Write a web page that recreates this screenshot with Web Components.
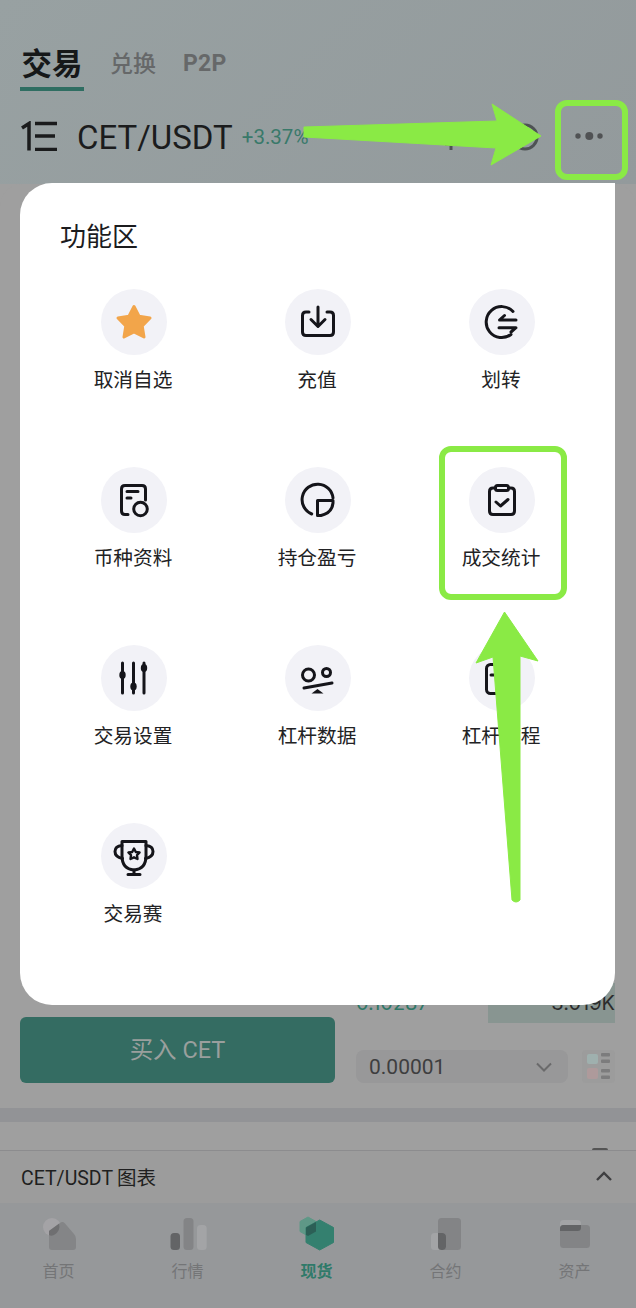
<!DOCTYPE html>
<html lang="zh">
<head>
<meta charset="utf-8">
<title>CET/USDT</title>
<style>
    html, body { margin: 0; padding: 0; background: #9f9f9f; }
    body { font-family: Inter, "Noto Sans CJK SC", sans-serif; }
</style>
</head>
<body>
<trade-page>
    <trade-header></trade-header>
    <market-sheet></market-sheet>
    <chart-bar></chart-bar>
    <bottom-nav>
        <nav-item label="首页">
            <svg viewBox="0 0 40 40" width="40" height="40">
                <circle cx="13" cy="12" r="9" fill="#a4a3a6"/>
                <path d="M10 16 L21 8 Q23.500 6 26 8.500 L35 19 Q37 21 37 24 V32 Q37 35 34 35 H13 Q10 35 10 32 Z" fill="#848587"/>
                <path d="M10 20 V16 L20 8.800 Q22 16 15 20 Q12 21.500 10 20 Z" fill="#6f6f71"/>
            </svg>
        </nav-item>
        <nav-item label="行情">
            <svg viewBox="0 0 40 40" width="40" height="40">
                <rect x="2.500" y="18" width="9.500" height="17" rx="3.500" fill="#636466"/>
                <rect x="15.500" y="3" width="10" height="32" rx="3.500" fill="#838486"/>
                <rect x="29" y="10" width="9.700" height="25" rx="3.500" fill="#a3a4a6"/>
            </svg>
        </nav-item>
        <nav-item label="现货">
            <svg viewBox="0 0 40 40" width="40" height="40">
                <path d="M11 2 L19 6.500 V16.500 L11 21 L3 16.500 V6.500 Z" fill="#5f9887" stroke="#5f9887" stroke-linejoin="round"/>
                <path d="M22.700 5 L36.500 12.500 V27.500 L22.700 35 L9 27.500 V12.500 Z" fill="#34806f" stroke="#34806f" stroke-linejoin="round"/>
                <path d="M9 12.500 L19 7 V16.500 L11 21 L9 19.800 Z" fill="#2c5f56"/>
            </svg>
        </nav-item>
        <nav-item label="合约">
            <svg viewBox="0 0 40 40" width="40" height="40">
                <rect x="12" y="3" width="23" height="32" rx="3.500" fill="#838486"/>
                <rect x="5" y="18" width="15" height="17" rx="3.500" fill="#a3a4a6"/>
                <path d="M12 18 H16.500 Q20 18 20 21.500 V31.500 Q20 35 16.500 35 H15.500 Q12 35 12 31.500 Z" fill="#636466"/>
            </svg>
        </nav-item>
        <nav-item label="资产">
            <svg viewBox="0 0 40 40" width="40" height="40">
                <rect x="5" y="5" width="21" height="11" rx="3.500" fill="#a3a4a6"/>
                <rect x="5" y="10" width="30" height="23" rx="3.500" fill="#838486"/>
                <path d="M8.500 10 H26 V12.500 Q26 16 22.500 16 H5 V13.500 Q5 10 8.500 10 Z" fill="#636466"/>
            </svg>
        </nav-item>
    </bottom-nav>

    <feature-sheet title="功能区">
        <feature-item label="取消自选">
            <svg viewBox="0 0 66 66"><path d="M33 17.500 L38 27.300 L49 29 L41.200 37 L43 48 L33 43 L23 48 L24.800 37 L17 29 L28 27.300 Z" fill="#f2a54a" stroke="#f2a54a" stroke-width="3" stroke-linejoin="round"/></svg>
        </feature-item>
        <feature-item label="充值">
            <svg viewBox="0 0 66 66" fill="none" stroke="#15151a" stroke-width="3" stroke-linecap="round" stroke-linejoin="round"><path d="M24 23 H21 Q17.500 23 17.500 26.500 V43 Q17.500 46.500 21 46.500 H45 Q48.500 46.500 48.500 43 V26.500 Q48.500 23 45 23 H42"/><path d="M33 18 V37 M26 30.500 L33 37.500 L40 30.500"/></svg>
        </feature-item>
        <feature-item label="划转">
            <svg viewBox="0 0 66 66" fill="none" stroke="#15151a" stroke-width="3" stroke-linecap="round" stroke-linejoin="round"><path d="M44 22.500 A15.500 15.500 0 1 0 42 45.500"/><path d="M47 31 H30.500 L35.500 26.500"/><path d="M30 38.700 H47 L42 43"/></svg>
        </feature-item>
        <feature-item label="币种资料">
            <svg viewBox="0 0 66 66" fill="none" stroke="#15151a" stroke-width="3" stroke-linecap="round" stroke-linejoin="round"><path d="M27 47.500 H24 Q20.500 47.500 20.500 44 V22 Q20.500 18.500 24 18.500 H41 Q44.500 18.500 44.500 22 V33"/><path d="M26 24.500 H37 M26 31 H30"/><circle cx="39.500" cy="42" r="6.800"/></svg>
        </feature-item>
        <feature-item label="持仓盈亏">
            <svg viewBox="0 0 66 66" fill="none" stroke="#15151a" stroke-width="3" stroke-linecap="round" stroke-linejoin="round"><path d="M26.700 47 A15.500 15.500 0 1 1 48 31"/><path d="M32.500 33.500 H48 V36 Q47 46 36 48.500 H32.500 Z"/></svg>
        </feature-item>
        <feature-item label="成交统计">
            <svg viewBox="0 0 66 66" fill="none" stroke="#15151a" stroke-width="3" stroke-linecap="round" stroke-linejoin="round"><path d="M26.500 21 H24 Q20.500 21 20.500 24.500 V44 Q20.500 47.500 24 47.500 H42 Q45.500 47.500 45.500 44 V24.500 Q45.500 21 42 21 H39.500"/><rect x="26.500" y="18.500" width="13" height="5" rx="2"/><path d="M27 35 L31.500 39 L39 32.500"/></svg>
        </feature-item>
        <feature-item label="交易设置">
            <svg viewBox="0 0 66 66" fill="none" stroke="#15151a" stroke-width="3" stroke-linecap="round"><path d="M21.500 18 V48 M32.500 18 V48 M43 18 V48"/><g fill="#15151a" stroke="none"><ellipse cx="21.500" cy="30" rx="3.200" ry="4"/><ellipse cx="32.500" cy="41.500" rx="3.200" ry="4"/><ellipse cx="43" cy="23" rx="3.200" ry="4"/></g></svg>
        </feature-item>
        <feature-item label="杠杆数据">
            <svg viewBox="0 0 66 66" fill="none" stroke="#15151a" stroke-width="3" stroke-linecap="round"><circle cx="23.500" cy="30" r="6"/><circle cx="41.500" cy="27.500" r="4"/><path d="M19 43 L47 38"/><path d="M32.500 44 L38.500 48.500 H26.500 Z" fill="#15151a" stroke="none"/></svg>
        </feature-item>
        <feature-item label="杠杆教程">
            <svg viewBox="0 0 66 66" fill="none" stroke="#15151a" stroke-width="3" stroke-linecap="round"><rect x="17.500" y="19.500" width="30" height="29" rx="4"/><path d="M22 30 H26"/></svg>
        </feature-item>
        <feature-item label="交易赛">
            <svg viewBox="0 0 66 66" fill="none" stroke="#15151a" stroke-width="3" stroke-linecap="round" stroke-linejoin="round"><path d="M21 18.500 H45 V33 Q45 46 33 47 Q21 46 21 33 Z"/><path d="M21 22.500 Q14 23 14 28.500 Q14 34 21.500 35.500 M45 22.500 Q52 23 52 28.500 Q52 34 44.500 35.500"/><path d="M33 47 V51 M27 51.500 H39"/><path d="M33 25.500 L34.800 29 L38.600 29.500 L36 32.200 L36.500 36 L33 34.300 L29.500 36 L30 32.200 L27.400 29.500 L31.200 29 Z" stroke-width="2.400"/></svg>
        </feature-item>
    </feature-sheet>

    <guide-marks></guide-marks>
</trade-page>

<script>
    class TradePage extends HTMLElement {
        constructor() {
            super();
            this.attachShadow({ mode: "open" });
            this.shadowRoot.innerHTML = `
            <style>
                :host {
                    display: flex;
                    flex-direction: column;
                    position: relative;
                    width: 636px;
                    height: 1308px;
                    overflow: hidden;
                    background: #9f9f9f;
                }
            </style>
            <slot></slot>
            `;
        }
    }

    class TradeHeader extends HTMLElement {
        constructor() {
            super();
            this.attachShadow({ mode: "open" });
            this.shadowRoot.innerHTML = `
            <style>
                :host {
                    display: block;
                    height: 184px;
                    box-sizing: border-box;
                    padding: 42px 8px 0 20px;
                    background: linear-gradient(135deg, #98a1a2, #939a9c);
                }
                .tabs {
                    display: flex;
                    align-items: flex-start;
                    gap: 26px;
                    height: 49px;
                }
                .tab {
                    font-size: 23px;
                    line-height: 44px;
                    font-weight: 500;
                    color: #666869;
                    height: 49px;
                    box-sizing: border-box;
                }
                .tab.latin { font-family: Roboto, sans-serif; font-weight: 700; font-size: 23px; letter-spacing: .3px; margin-left: 1px; }
                .tab.on {
                    font-size: 30.500px;
                    font-weight: 700;
                    color: #161819;
                    width: 64px;
                    text-align: center;
                    white-space: nowrap;
                    border-bottom: 4px solid #2f6e62;
                }
                .pair {
                    display: flex;
                    align-items: center;
                    height: 50px;
                    margin-top: 20px;
                }
                .logo { width: 36px; height: 30px; margin-left: 1px; }
                .name {
                    font-family: Roboto, sans-serif;
                    font-size: 33px;
                    color: #1b1c1d;
                    margin: 2px 0 0 20px;
                }
                .rate {
                    font-family: Roboto, sans-serif;
                    font-size: 20.500px;
                    color: #39796a;
                    margin-left: 9px;
                    margin-top: 2px;
                }
                .tools {
                    margin-left: auto;
                    display: flex;
                    align-items: center;
                    gap: 34px;
                }
                .dots { display: block; margin-right: 21px; }
            </style>
            <div class="tabs">
                <div class="tab on">交易</div>
                <div class="tab">兑换</div>
                <div class="tab latin">P2P</div>
            </div>
            <div class="pair">
                <svg class="logo" viewBox="0 0 36 30" fill="none" stroke="#1a1b1c" stroke-width="3.500"><path d="M1 7 L8 2.500 V29.500"/><path d="M14 2.500 H36 M14 15 H34 M14 28.500 H36"/></svg>
                <span class="name">CET/USDT</span>
                <span class="rate">+3.37%</span>
                <span class="tools">
                    <svg width="100" height="36" viewBox="0 0 100 36" fill="none" stroke="#4e5254" stroke-width="3"><path d="M4 26 H16 M10 26 V32"/><circle cx="84" cy="19" r="12"/></svg>
                    <svg class="dots" width="32" height="10" viewBox="0 0 32 10" fill="#505254"><circle cx="3" cy="5" r="2.700"/><circle cx="14.300" cy="5" r="4"/><circle cx="25" cy="5" r="2.700"/></svg>
                </span>
            </div>
            `;
        }
    }

    class MarketSheet extends HTMLElement {
        constructor() {
            super();
            this.attachShadow({ mode: "open" });
            this.shadowRoot.innerHTML = `
            <style>
                :host {
                    display: flex;
                    align-items: flex-end;
                    gap: 21px;
                    height: 924px;
                    box-sizing: border-box;
                    padding: 0 21px 25px 20px;
                    background: #9f9f9f;
                    border-radius: 22px 22px 0 0;
                    font-family: Inter, sans-serif;
                }
                .buy {
                    width: 315px;
                    height: 66px;
                    flex: none;
                    box-sizing: border-box;
                    padding-bottom: 4px;
                    display: flex;
                    align-items: center;
                    justify-content: center;
                    border-radius: 6px;
                    background: #346c62;
                    color: #9a9f9d;
                    font-size: 23.500px;
                    font-family: Roboto, "Noto Sans CJK SC", sans-serif;
                }
                .side { flex: 1; }
                .row {
                    display: flex;
                    justify-content: space-between;
                    align-items: center;
                    height: 40px;
                    font-size: 20px;
                }
                .price { color: #2f7868; }
                .qty {
                    width: 127px;
                    height: 40px;
                    box-sizing: border-box;
                    text-align: right;
                    line-height: 40px;
                    background: #889591;
                    color: #2c2c2c;
                }
                .tools {
                    display: flex;
                    justify-content: space-between;
                    margin-top: 27px;
                }
                .select {
                    width: 212px;
                    height: 33px;
                    box-sizing: border-box;
                    padding: 0 15px 0 13px;
                    display: flex;
                    align-items: center;
                    justify-content: space-between;
                    border-radius: 8px;
                    background: #989899;
                    color: #3e3e3f;
                    font-size: 21px;
                    font-family: Roboto, sans-serif;
                }
                .book { width: 33px; height: 33px; display: block; }
            </style>
            <div class="buy"><span>买入 CET</span></div>
            <div class="side">
                <div class="row">
                    <span class="price">0.10287</span>
                    <span class="qty">3.019K</span>
                </div>
                <div class="tools">
                    <div class="select">
                        <span>0.00001</span>
                        <svg width="18" height="10" viewBox="0 0 18 10" fill="none" stroke="#6a6a6b" stroke-width="2"><path d="M2 1.500 L9 8.500 L16 1.500"/></svg>
                    </div>
                    <svg class="book" viewBox="0 0 33 33">
                        <rect width="33" height="33" rx="4" fill="#9c9c9c"/>
                        <rect x="5" y="4" width="11" height="10" rx="2" fill="#9fb0ae"/>
                        <rect x="5" y="18" width="11" height="11" rx="2" fill="#ae9a9b"/>
                        <rect x="19" y="3" width="9" height="3.500" rx="1" fill="#7c7c7d"/>
                        <rect x="19" y="9.500" width="9" height="3.500" rx="1" fill="#7c7c7d"/>
                        <rect x="19" y="19" width="9" height="3.500" rx="1" fill="#7c7c7d"/>
                        <rect x="19" y="25.500" width="9" height="3.500" rx="1" fill="#7c7c7d"/>
                    </svg>
                </div>
            </div>
            `;
        }
    }

    class ChartBar extends HTMLElement {
        constructor() {
            super();
            this.attachShadow({ mode: "open" });
            this.shadowRoot.innerHTML = `
            <style>
                :host { display: block; }
                .gap { height: 14px; background: #929396; }
                .peek {
                    height: 28px;
                    display: flex;
                    align-items: flex-end;
                    justify-content: flex-end;
                    padding-right: 28px;
                    background: #9f9f9f;
                }
                .peek i { width: 16px; height: 2px; border-radius: 3px 3px 0 0; background: #555; }
                .bar {
                    height: 53px;
                    box-sizing: border-box;
                    display: flex;
                    align-items: center;
                    justify-content: space-between;
                    padding: 0 23px 2px 21px;
                    border-top: 1px solid #8c8c8e;
                    background: #9c9c9c;
                    font-family: Roboto, "Noto Sans CJK SC", sans-serif;
                    font-size: 19.500px;
                    color: #1f1f20;
                }
                .bar b { font-weight: 400; margin-left: 4px; }
            </style>
            <div class="gap"></div>
            <div class="peek"><i></i></div>
            <div class="bar">
                <span>CET/USDT<b>图表</b></span>
                <svg width="18" height="12" viewBox="0 0 18 12" fill="none" stroke="#3f3f41" stroke-width="2.400"><path d="M2 10 L9 3 L16 10"/></svg>
            </div>
            `;
        }
    }

    class BottomNav extends HTMLElement {
        constructor() {
            super();
            this.attachShadow({ mode: "open" });
            this.shadowRoot.innerHTML = `
            <style>
                :host {
                    display: grid;
                    grid-template-columns: repeat(5, 129px);
                    align-content: start;
                    margin-left: -6px;
                    flex: 1;
                    padding-top: 12px;
                    background: #96989a;
                }
                ::slotted(nav-item:nth-child(3)) { --nav-color: #2f7a69; --nav-weight: 700; }
            </style>
            <slot></slot>
            `;
        }
    }

    class NavItem extends HTMLElement {
        constructor() {
            super();
            this.attachShadow({ mode: "open" });
            this.shadowRoot.innerHTML = `
            <style>
                :host {
                    display: flex;
                    flex-direction: column;
                    align-items: center;
                    gap: 4px;
                    font-size: 16px;
                    line-height: 24px;
                    color: var(--nav-color, #747577);
                    font-weight: var(--nav-weight, 400);
                }
                ::slotted(svg) { display: block; }
            </style>
            <slot></slot>
            <span id="label"></span>
            `;
        }

        connectedCallback() {
            this.shadowRoot.querySelector("#label").textContent = this.getAttribute("label") || "";
        }
    }

    class FeatureSheet extends HTMLElement {
        constructor() {
            super();
            this.attachShadow({ mode: "open" });
            this.shadowRoot.innerHTML = `
            <style>
                :host {
                    position: absolute;
                    left: 20px;
                    top: 183px;
                    width: 595px;
                    height: 822px;
                    box-sizing: border-box;
                    padding: 36px 0 0 22px;
                    background: #fff;
                    border-radius: 32px 0 32px 32px;
                }
                h2 {
                    margin: 0 0 34px 18px;
                    font-size: 26px;
                    line-height: 36px;
                    font-weight: 400;
                    color: #1c1c1e;
                }
                .grid {
                    display: grid;
                    grid-template-columns: repeat(3, 184px);
                    grid-auto-rows: 178px;
                }
            </style>
            <h2 id="title"></h2>
            <div class="grid"><slot></slot></div>
            `;
        }

        connectedCallback() {
            this.shadowRoot.querySelector("#title").textContent = this.getAttribute("title") || "";
        }
    }

    class FeatureItem extends HTMLElement {
        constructor() {
            super();
            this.attachShadow({ mode: "open" });
            this.shadowRoot.innerHTML = `
            <style>
                :host {
                    display: flex;
                    flex-direction: column;
                    align-items: center;
                }
                .icon {
                    width: 66px;
                    height: 66px;
                    border-radius: 50%;
                    background: #f2f2f7;
                }
                ::slotted(svg) { display: block; width: 66px; height: 66px; }
                .label {
                    margin: 12px 2px 0 0;
                    font-size: 19.700px;
                    line-height: 27px;
                    color: #222224;
                    white-space: nowrap;
                }
            </style>
            <div class="icon"><slot></slot></div>
            <div class="label" id="label"></div>
            `;
        }

        connectedCallback() {
            this.shadowRoot.querySelector("#label").textContent = this.getAttribute("label") || "";
        }
    }

    // green arrows and frames drawn on top of the screenshot
    class GuideMarks extends HTMLElement {
        constructor() {
            super();
            this.attachShadow({ mode: "open" });
            this.shadowRoot.innerHTML = `
            <style>
                :host { position: absolute; inset: 0; pointer-events: none; }
                svg { display: block; }
            </style>
            <svg width="636" height="1308" viewBox="0 0 636 1308">
                <g fill="none" stroke="#8aea45" stroke-width="6">
                    <rect x="558" y="103" width="67" height="74" rx="9"/>
                    <rect x="442" y="449" width="122" height="148" rx="9"/>
                </g>
                <g fill="#8aea45" stroke="#8aea45" stroke-width="1" stroke-linejoin="round">
                    <path d="M304 127 L497 121 L492 104 L541 136 L491 165 L496 148 L304 137 Z"/>
                    <path d="M504.500 612 L476 663 L493 657 L512 900 Q516 904 520 900 L520 656 L538 661 Z"/>
                </g>
            </svg>
            `;
        }
    }

    customElements.define("trade-page", TradePage);
    customElements.define("trade-header", TradeHeader);
    customElements.define("market-sheet", MarketSheet);
    customElements.define("chart-bar", ChartBar);
    customElements.define("bottom-nav", BottomNav);
    customElements.define("nav-item", NavItem);
    customElements.define("feature-sheet", FeatureSheet);
    customElements.define("feature-item", FeatureItem);
    customElements.define("guide-marks", GuideMarks);
</script>
</body>
</html>
